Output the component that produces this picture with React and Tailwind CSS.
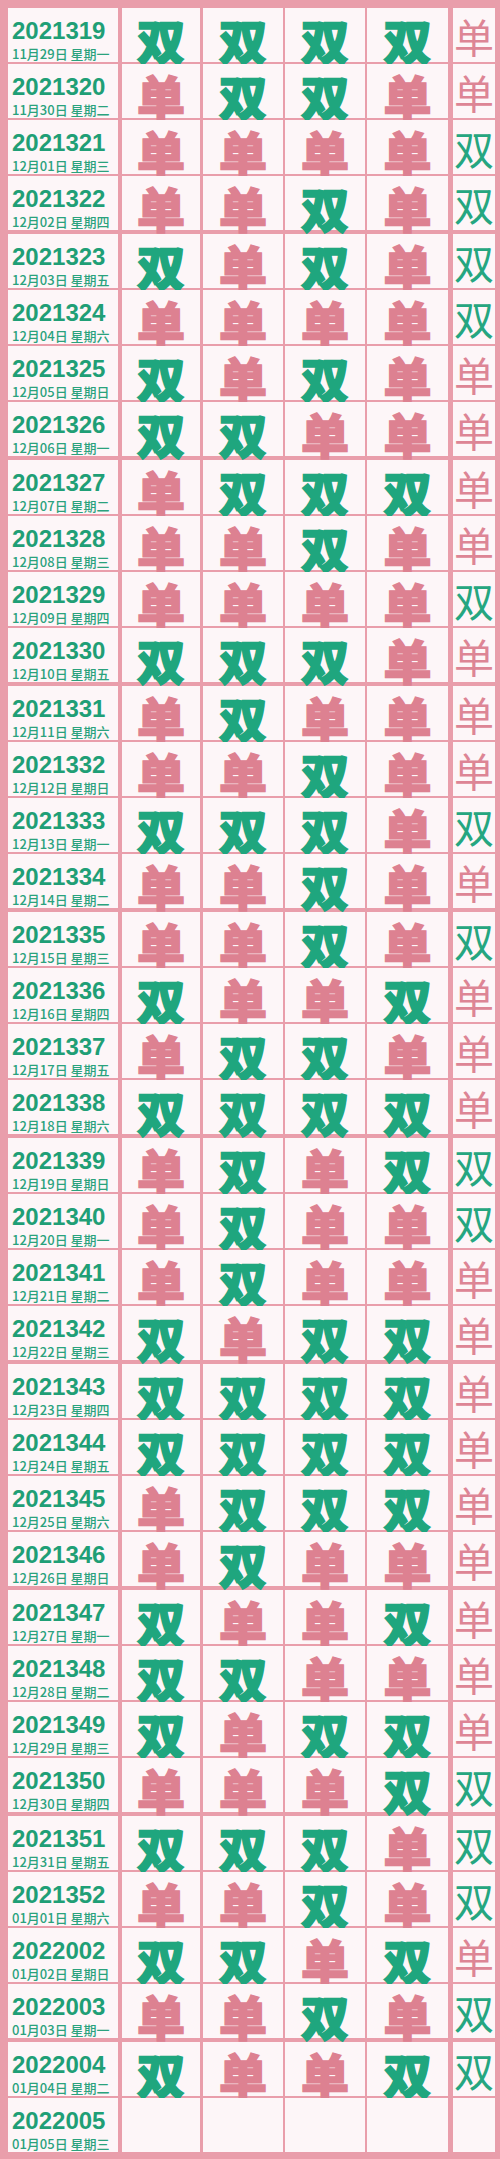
import React from 'react';

// 期号 + 五位 单/双 记录（最后一位是小字列）
const rows = [
  ['2021319', '双双双双单'],
  ['2021320', '单双双单单'],
  ['2021321', '单单单单双'],
  ['2021322', '单单双单双'],
  ['2021323', '双单双单双'],
  ['2021324', '单单单单双'],
  ['2021325', '双单双单单'],
  ['2021326', '双双单单单'],
  ['2021327', '单双双双单'],
  ['2021328', '单单双单单'],
  ['2021329', '单单单单双'],
  ['2021330', '双双双单单'],
  ['2021331', '单双单单单'],
  ['2021332', '单单双单单'],
  ['2021333', '双双双单双'],
  ['2021334', '单单双单单'],
  ['2021335', '单单双单双'],
  ['2021336', '双单单双单'],
  ['2021337', '单双双单单'],
  ['2021338', '双双双双单'],
  ['2021339', '单双单双双'],
  ['2021340', '单双单单双'],
  ['2021341', '单双单单单'],
  ['2021342', '双单双双单'],
  ['2021343', '双双双双单'],
  ['2021344', '双双双双单'],
  ['2021345', '单双双双单'],
  ['2021346', '单双单单单'],
  ['2021347', '双单单双单'],
  ['2021348', '双双单单单'],
  ['2021349', '双单双双单'],
  ['2021350', '单单单双双'],
  ['2021351', '双双双单双'],
  ['2021352', '单单双单双'],
  ['2022002', '双双单双单'],
  ['2022003', '单单双单双'],
  ['2022004', '双单单双双'],
  ['2022005', ''],
];

const WEEK = ['日', '一', '二', '三', '四', '五', '六'];
const pad = (n) => String(n).padStart(2, '0');

const dateLabel = (i) => {
  const d = new Date(Date.UTC(2021, 10, 29) + i * 86400000);
  return `${pad(d.getUTCMonth() + 1)}月${pad(d.getUTCDate())}日 星期${WEEK[d.getUTCDay()]}`;
};

const cjk = { fontFamily: '"Noto Sans CJK SC", "Noto Sans", sans-serif' };

const BigCell = ({ ch, className }) => (
  <div className={`${className} h-full bg-[#fdf6f8] flex items-center justify-center pt-[7px]`}>
    {ch && (
      <span
        className={`text-[48px] leading-none font-black [-webkit-text-stroke:1.5px_currentColor] ${ch === '双' ? 'text-[#1fa67e]' : 'text-[#dd8191]'}`}
        style={cjk}
      >
        {ch}
      </span>
    )}
  </div>
);

export default function App() {
  return (
    <div className="w-[500px] min-h-[2159px] bg-[#e99eab] pt-[8px] pl-[8px] pr-[5px] pb-[8px]">
      {rows.map(([num, picks], i) => {
        const p = picks.split('');
        const last = p[4];
        return (
          <div
            key={num}
            className={`flex h-[54px] ${i === 0 ? '' : i % 4 === 0 ? 'mt-[4px]' : 'mt-[2px]'}`}
          >
            {/* 期号 + 日期 */}
            <div className="w-[110px] h-full bg-[#fdf6f8] flex flex-col pl-[4px] pt-[11px] overflow-hidden">
              <span
                className="text-[24px] leading-none font-bold text-[#1f9f76]"
                style={{ fontFamily: '"Liberation Sans", Arial, sans-serif' }}
              >
                {num}
              </span>
              <span className="mt-[4px] text-[13px] leading-none font-medium text-[#2aa27d] whitespace-nowrap" style={cjk}>
                {dateLabel(i)}
              </span>
            </div>

            <BigCell ch={p[0]} className="ml-[4px] w-[78px]" />
            <BigCell ch={p[1]} className="ml-[3px] w-[80px]" />
            <BigCell ch={p[2]} className="ml-[2px] w-[80px]" />
            <BigCell ch={p[3]} className="ml-[2px] w-[81px]" />

            {/* 小字列 */}
            <div className="ml-[5px] w-[42px] h-full bg-[#fdf6f8] flex items-center justify-center pt-[2px]">
              {last && (
                <span
                  className={`text-[40px] leading-none font-normal ${last === '双' ? 'text-[#25a680]' : 'text-[#dd8595]'}`}
                  style={cjk}
                >
                  {last}
                </span>
              )}
            </div>
          </div>
        );
      })}
    </div>
  );
}
